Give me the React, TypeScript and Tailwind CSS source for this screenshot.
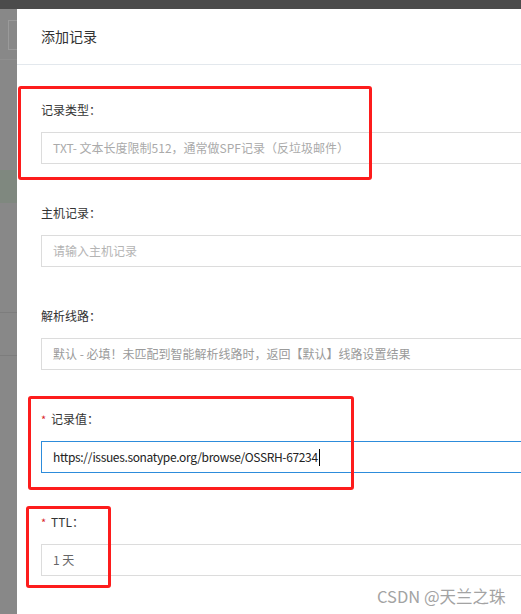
import React from "react";

const font = "font-['Microsoft_YaHei','Noto_Sans_CJK_SC','Noto_Sans',sans-serif]";

function Label({ text, required }: { text: string; required?: boolean }) {
  return (
    <div className="flex h-[20px] items-center text-[12px] leading-[20px] text-[#333]">
      {required && <span className="mr-[6px] w-[4px] text-[11px] text-[#d9262b]">*</span>}
      <span>{text}</span>
    </div>
  );
}

function Field({
  label,
  required,
  children,
  focused,
}: {
  label: string;
  required?: boolean;
  children: React.ReactNode;
  focused?: boolean;
}) {
  return (
    <div className="flex flex-col">
      <Label text={label} required={required} />
      <div
        className={
          "mt-[12px] flex h-[32px] w-[540px] items-center border px-[11px] text-[12px] " +
          (focused ? "border-[#2d8cdb]" : "border-[#dcdcdc]")
        }
      >
        {children}
      </div>
    </div>
  );
}

export default function App() {
  return (
    <div className={"relative h-[614px] w-[521px] overflow-hidden bg-[#888888] " + font}>
      <div className="h-[9px] w-full bg-[#4b4b4b]" />
      <div className="flex h-[605px]">
        <div className="flex w-[17px] flex-col">
          <div className="h-[11px]" />
          <div className="ml-[8px] h-[30px] border border-r-0 border-[#9a9a9a]" />
          <div className="h-[9px]" />
          <div className="h-[111px] border-t border-[#8f8f8f]" />
          <div className="h-[33px] bg-[#7f887f]" />
          <div className="h-[109px]" />
          <div className="h-[43px] border-t border-[#7d7d7d]" />
          <div className="flex-1 border-t border-[#7d7d7d]" />
        </div>
        <div className="flex-1 overflow-hidden bg-white">
          <div className="flex h-[56px] items-center border-b border-[#e3e8ed] pl-[24px] text-[14px] text-[#333]">
            添加记录
          </div>
          <div className="flex flex-col gap-[39px] pl-[24px] pt-[35px]">
            <Field label="记录类型：">
              <span className="whitespace-nowrap text-[#aaaaaa]">
                TXT- 文本长度限制512，通常做SPF记录（反垃圾邮件）
              </span>
            </Field>
            <Field label="主机记录：">
              <span className="whitespace-nowrap text-[#b4b4b4]">请输入主机记录</span>
            </Field>
            <Field label="解析线路：">
              <span className="whitespace-nowrap text-[#9a9a9a]">
                默认 - 必填！未匹配到智能解析线路时，返回【默认】线路设置结果
              </span>
            </Field>
            <Field label="记录值：" required focused>
              <span className="whitespace-nowrap tracking-[-0.35px] text-[#222]">
                https://issues.sonatype.org/browse/OSSRH-67234
              </span>
              <span className="ml-[1px] h-[17px] w-[1px] bg-black" />
            </Field>
            <Field label="TTL：" required>
              <span className="whitespace-nowrap text-[#666]">1 天</span>
            </Field>
          </div>
        </div>
      </div>

      <div className="absolute left-[18px] top-[86px] h-[94px] w-[354px] rounded-[3px] border-[3px] border-[#fd1c1c]" />
      <div className="absolute left-[28px] top-[396px] h-[94px] w-[326px] rounded-[3px] border-[3px] border-[#fd1c1c]" />
      <div className="absolute left-[26px] top-[506px] h-[82px] w-[85px] rounded-[3px] border-[3px] border-[#fd1c1c]" />

      <div className="absolute left-[377px] top-[586px] whitespace-nowrap text-[16.5px] leading-[20px] text-[#a3a3a3]">
        CSDN @天兰之珠
      </div>
    </div>
  );
}
